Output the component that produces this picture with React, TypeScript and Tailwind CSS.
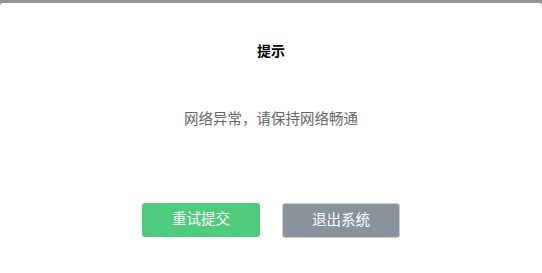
export default function App() {
  return (
    <div className="w-[542px] h-[273px] bg-[#959595] pt-[3px] overflow-hidden" style={{ fontFamily: '"Liberation Sans", "Noto Sans CJK SC", sans-serif' }}>
      <div className="h-full bg-white rounded-t-[3px] flex flex-col items-center">
        <div className="mt-[38px] h-[20px] leading-[20px] text-[14px] font-bold text-black">提示</div>
        <div className="mt-[48px] h-[20px] leading-[20px] text-[14.5px] text-[#666666]">网络异常，请保持网络畅通</div>
        <div className="mt-[74px] flex gap-[22px]">
          <button className="w-[118px] h-[34px] rounded-[3px] bg-[#4fcb7d] text-white text-[14.5px]">重试提交</button>
          <button className="w-[118px] h-[35px] rounded-[3px] bg-[#89939b] border border-[#c9cdd1] text-white text-[14.5px]">退出系统</button>
        </div>
      </div>
    </div>
  );
}
